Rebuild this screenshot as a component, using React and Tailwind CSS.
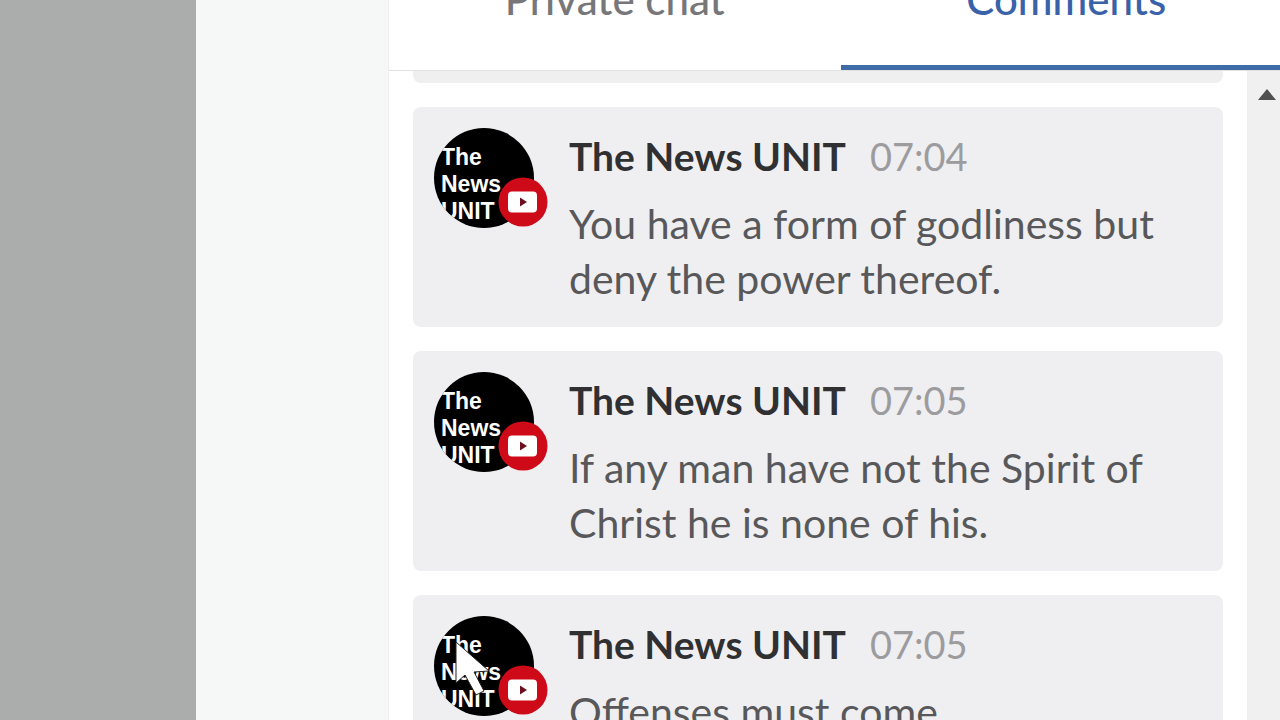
const comments = [
  { id: 1, author: 'The News UNIT', time: '07:04', text: 'You have a form of godliness but deny the power thereof.' },
  { id: 2, author: 'The News UNIT', time: '07:05', text: 'If any man have not the Spirit of Christ he is none of his.' },
  { id: 3, author: 'The News UNIT', time: '07:05', text: 'Offenses must come' },
];

const YoutubeBadge = () => (
  <svg viewBox="0 0 50 50" className="absolute left-[64px] top-[49px] h-[50px] w-[50px]" aria-hidden="true">
    <circle cx="25" cy="25" r="24.5" fill="#cf0a18" />
    <rect x="10" y="14.5" width="29" height="21" rx="4" fill="#fff" />
    <path d="M22 20.5v9l7-4.5z" fill="#6d1020" />
  </svg>
);

const Pointer = () => (
  <svg viewBox="0 0 46 58" className="absolute left-[20px] top-[24px] h-[58px] w-[46px]" aria-hidden="true">
    <path
      d="M2 2v41l9-8 11 20 8-4-10-19 15-1z"
      fill="#fff"
      stroke="#222"
      strokeWidth="1"
      strokeLinejoin="round"
    />
  </svg>
);

const Avatar = ({ children }) => (
  <div className="relative h-[100px] w-[100px] shrink-0">
    <div className="h-full w-full overflow-hidden rounded-full bg-black pl-[7px] pt-[16px] font-['Liberation_Sans'] text-[23px] font-bold leading-[27px] text-white">
      <div>The</div>
      <div>News</div>
      <div>UNIT</div>
    </div>
    <YoutubeBadge />
    {children}
  </div>
);

const Comment = ({ author, time, text, children }) => (
  <li className="flex shrink-0 gap-[35px] rounded-lg bg-[#efeff1] p-[21px]">
    <Avatar>{children}</Avatar>
    <div className="min-w-0 flex-1">
      <div className="flex items-baseline gap-6 leading-[56px]">
        <span className="text-[39px] font-bold text-[#303033]">{author}</span>
        <time className="text-[38px] text-[#9c9c9f]">{time}</time>
      </div>
      <p className="mt-3 text-[41px] leading-[55px] text-[#58585b]">{text}</p>
    </div>
  </li>
);

const App = () => {
  return (
    <div className="flex h-screen overflow-hidden bg-[#f6f8f7] font-['Lato',sans-serif]">
      <div className="w-[196px] shrink-0 bg-[#abadac]" />
      <div className="w-[192px] shrink-0" />

      <aside className="flex min-w-0 flex-1 flex-col border-l border-[#efefef] bg-white">
        {/* Tabs */}
        <nav className="-mr-3 flex h-[71px] shrink-0 items-end overflow-hidden border-b border-[#e2e2e2] text-[42px] font-medium leading-[55px]">
          <button className="flex-1 border-b-[5px] border-transparent pb-[38px] text-[#77777a]">Private chat</button>
          <button className="flex-1 border-b-[5px] border-[#3f6ba6] pb-[38px] text-[#3a62a8]">Comments</button>
        </nav>

        <div className="flex min-h-0 flex-1">
          {/* Comment list */}
          <div className="min-w-0 flex-1 overflow-hidden px-6">
            <div className="h-3 rounded-b-lg bg-[#efeff0]" />
            <ul className="mt-6 flex flex-col gap-6">
              {comments.map(({ id, ...comment }) => (
                <Comment key={id} {...comment}>
                  {id === 3 && <Pointer />}
                </Comment>
              ))}
            </ul>
          </div>

          {/* Scrollbar */}
          <div className="flex w-[33px] shrink-0 justify-end bg-[#f0f0f0] pr-1 pt-[18px]">
            <svg viewBox="0 0 18 11" className="h-[11px] w-[18px]" aria-hidden="true">
              <path d="M0 11 9 0l9 11z" fill="#505050" />
            </svg>
          </div>
        </div>
      </aside>
    </div>
  );
};

export default App;
